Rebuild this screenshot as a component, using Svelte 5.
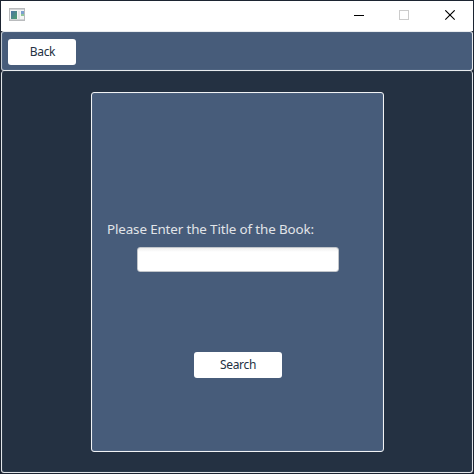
<script>
  let title = $state('');
</script>

<div class="desktop">
  <div class="window">
    <header class="titlebar">
      <svg class="appicon" width="16" height="14" viewBox="0 0 16 14" shape-rendering="crispEdges">
        <defs>
          <linearGradient id="screen" x1="0" y1="0" x2="1" y2="1">
            <stop offset="0" stop-color="#4c72a6" />
            <stop offset="1" stop-color="#4fa06c" />
          </linearGradient>
        </defs>
        <rect x="0.5" y="0.5" width="15" height="12" fill="#f5f5f5" stroke="#b9bbbd" />
        <rect x="1" y="1" width="14" height="1" fill="#d2d4d6" />
        <rect x="2" y="3" width="6" height="8" fill="url(#screen)" />
        <rect x="9" y="3" width="2" height="8" fill="#e3e4e6" />
        <rect x="12" y="3" width="3" height="3" fill="#7c9fce" />
        <rect x="12" y="6" width="3" height="2" fill="#8fc79b" />
        <rect x="1" y="11" width="14" height="1" fill="#d2d4d6" />
      </svg>
      <svg class="controls" width="104" height="12" viewBox="0 0 104 12">
        <path d="M0 5.5h10" stroke="#000" shape-rendering="crispEdges" />
        <rect x="45.5" y="0.5" width="9" height="9" fill="none" stroke="#ccc" />
        <path d="M91.3 0.3l9.4 9.4M100.7 0.3l-9.4 9.4" stroke="#000" stroke-width="1.1" />
      </svg>
    </header>
    <nav class="toolbar"><button class="back">Back</button></nav>
    <main>
      <section class="card">
        <label for="title">Please Enter the Title of the Book:</label>
        <input id="title" type="text" bind:value={title} />
        <button class="search">Search</button>
      </section>
    </main>
  </div>
</div>

<style>
  :global(body) { margin: 0; }
  * { box-sizing: border-box; }
  .desktop {
    width: 474px;
    height: 474px;
    padding: 1px;
    background: #1c2431;
    overflow: hidden;
    font-family: "Noto Sans", "Open Sans", sans-serif;
  }
  .window { display: flex; flex-direction: column; width: 472px; height: 472px; }
  .titlebar {
    display: flex;
    flex: none;
    justify-content: space-between;
    height: 30px;
    padding: 7px 15px 0 8px;
    background: #fff;
  }
  .controls { margin-top: 2px; }
  .toolbar {
    flex: none;
    height: 40px;
    padding: 7px 6px;
    background: #475c7a;
    border: 1px solid #e8ebee;
    border-left-color: #c3cad2;
    border-radius: 3px;
    box-shadow: inset 0 0 1px #8494a8;
  }
  button {
    display: block;
    height: 26px;
    padding: 0;
    border: 0;
    border-radius: 3px;
    background: #fff;
    color: #243142;
    font-family: inherit;
    font-size: 12px;
    line-height: 26px;
    text-align: center;
  }
  .back { width: 68px; padding-left: 1px; letter-spacing: -0.35px; }
  main {
    flex: 1;
    padding: 21px 0 0 89px;
    border: 1px solid #e2e5e9;
    border-top: 0;
    border-radius: 3px;
    background: #243142;
    box-shadow: inset 0 0 1px #73808f;
  }
  .card {
    display: flex;
    flex-direction: column;
    width: 293px;
    height: 360px;
    padding: 126px 15px 0;
    border: 1px solid #f1f3f5;
    border-radius: 3px;
    background: #475c7a;
    box-shadow: inset 0 0 1px #8494a8;
  }
  label {
    height: 20px;
    color: #e1e4e8;
    font-size: 13.4px;
    line-height: 20px;
    letter-spacing: -0.13px;
    white-space: nowrap;
  }
  input {
    width: 202px;
    height: 25px;
    margin: 8px 0 0 30px;
    padding: 0 6px;
    border: 1px solid #c1c5ca;
    border-radius: 3px;
    outline: 0;
    background: linear-gradient(#eee, #fff 4px);
    font: 12px "Noto Sans", sans-serif;
  }
  .search { width: 88px; margin: 80px 0 0 87px; letter-spacing: -0.3px; }
</style>
